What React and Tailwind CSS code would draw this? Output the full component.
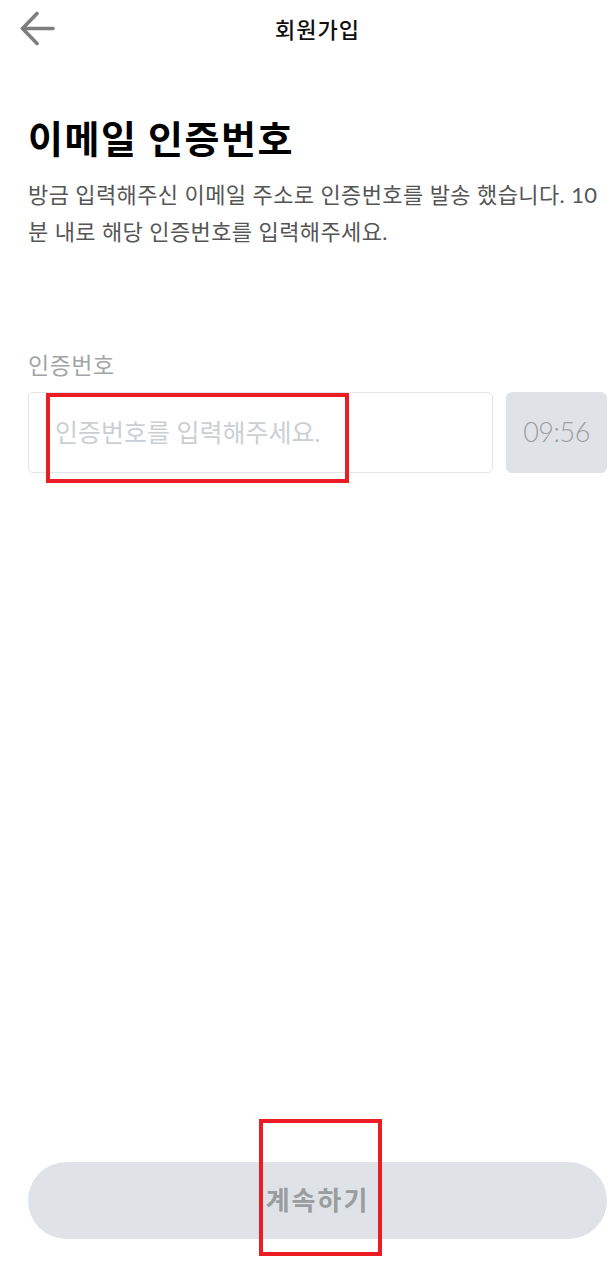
import React from "react";

export default function App() {
  return (
    <div className="relative flex h-[1261px] w-full flex-col bg-white font-['Lato','Noto_Sans_CJK_KR',sans-serif]">
      {/* Header */}
      <header className="grid h-[58px] grid-cols-[70px_1fr_50px] items-center">
        <button className="flex h-full items-center pl-[19px]">
          <svg width="37" height="36" viewBox="0 0 37 36" fill="none" stroke="#7e7e7e" strokeWidth="3.6" strokeLinecap="round" strokeLinejoin="round">
            <path d="M34 17.5H3.5" />
            <path d="M18 2.5L3.5 17.5L18 32.5" />
          </svg>
        </button>
        <h1 className="text-center text-[22px] font-medium tracking-[1px] text-[#111]">회원가입</h1>
        <div />
      </header>

      <main className="flex flex-1 flex-col pl-[28px] pr-[8px]">
        <h2 className="mt-[57px] text-[38px] font-bold leading-[47px] tracking-[1.5px] text-black">
          이메일 인증번호
        </h2>
        <p className="mt-[14px] text-[22px] leading-[37px] tracking-[0.4px] text-[#555]">
          방금 입력해주신 이메일 주소로 인증번호를 발송 했습니다. 10 분 내로 해당 인증번호를 입력해주세요.
        </p>

        <label className="mt-[100px] text-[23px] leading-[30px] tracking-[0.5px] text-[#a2a4a6]">인증번호</label>
        <div className="mt-[12px] flex gap-[13px]">
          <div className="flex h-[81px] flex-1 items-center rounded-[5px] border border-[#e2e6ea] px-[26px]">
            <span className="text-[25px] text-[#cbcfd3]">인증번호를 입력해주세요.</span>
          </div>
          <div className="flex h-[81px] w-[101px] items-center justify-center rounded-[6px] bg-[#dfe3e7]">
            <span className="text-[27px] font-light tracking-[-0.5px] text-[#9c9fa2]">09:56</span>
          </div>
        </div>

        <button className="mb-[22px] mt-auto flex h-[77px] w-full items-center justify-center rounded-full bg-[#dfe3e7]">
          <span className="text-[26px] font-bold tracking-[2px] text-[#9a9d9f]">계속하기</span>
        </button>
      </main>

      {/* annotation boxes */}
      <div className="pointer-events-none absolute left-[46px] top-[393px] h-[90px] w-[303px] border-[4px] border-[#ec1c24]" />
      <div className="pointer-events-none absolute left-[259px] top-[1119px] h-[137px] w-[123px] border-[4px] border-[#ec1c24]" />
    </div>
  );
}
